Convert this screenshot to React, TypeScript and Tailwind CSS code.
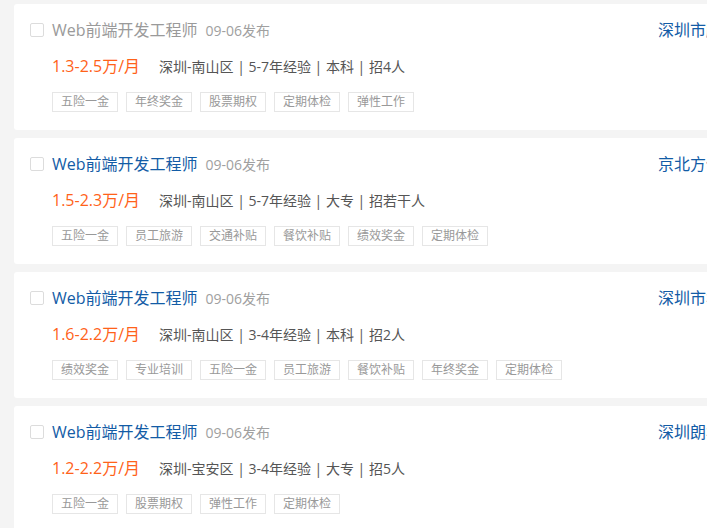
import React from 'react';

type Job = {
  title: string;
  visited?: boolean;
  date: string;
  salary: string;
  info: string;
  tags: string[];
  company: string;
};

const jobs: Job[] = [
  { title: 'Web前端开发工程师', visited: true, date: '09-06发布', salary: '1.3-2.5万/月', info: '深圳-南山区 | 5-7年经验 | 本科 | 招4人', tags: ['五险一金', '年终奖金', '股票期权', '定期体检', '弹性工作'], company: '深圳市腾讯计算机系统有限公司' },
  { title: 'Web前端开发工程师', date: '09-06发布', salary: '1.5-2.3万/月', info: '深圳-南山区 | 5-7年经验 | 大专 | 招若干人', tags: ['五险一金', '员工旅游', '交通补贴', '餐饮补贴', '绩效奖金', '定期体检'], company: '京北方信息技术股份有限公司' },
  { title: 'Web前端开发工程师', date: '09-06发布', salary: '1.6-2.2万/月', info: '深圳-南山区 | 3-4年经验 | 本科 | 招2人', tags: ['绩效奖金', '专业培训', '五险一金', '员工旅游', '餐饮补贴', '年终奖金', '定期体检'], company: '深圳市华云中盛科技有限公司' },
  { title: 'Web前端开发工程师', date: '09-06发布', salary: '1.2-2.2万/月', info: '深圳-宝安区 | 3-4年经验 | 大专 | 招5人', tags: ['五险一金', '股票期权', '弹性工作', '定期体检'], company: '深圳朗华供应链服务有限公司' },
];

const font = { fontFamily: '"Open Sans", "Noto Sans CJK SC", sans-serif' };

export default function App() {
  return (
    <div className="w-[707px] h-[528px] overflow-hidden bg-[#f4f4f4] pl-[14px] pt-1" style={font}>
      <div className="flex flex-col gap-2 w-[900px]">
        {jobs.map((job, i) => (
          <div key={i} className="bg-white rounded-[3px] pl-4 pt-[14px] pb-[18px] flex">
            <div className="w-[628px] shrink-0">
              <div className="flex items-center h-6">
                <span className="w-[14px] h-[14px] border border-[#dcdcdc] rounded-[2px] bg-white mr-2 shrink-0" />
                <span className={`text-[16px] leading-6 ${job.visited ? 'text-[#9a9a9a]' : 'text-[#135ca6]'}`}>{job.title}</span>
                <span className="ml-2 text-[14px] text-[#a0a0a0]">{job.date}</span>
              </div>
              <div className="flex items-center h-6 mt-3 pl-[22px]">
                <span className="text-[16px] text-[#ff6219] w-[107px] shrink-0 whitespace-nowrap">{job.salary}</span>
                <span className="text-[14px] text-[#555] whitespace-nowrap">{job.info}</span>
              </div>
              <div className="flex gap-2 mt-[14px] pl-[22px]">
                {job.tags.map((t) => (
                  <span key={t} className="border border-[#e6e6e6] px-2 h-5 leading-[18px] text-[12px] text-[#999]">{t}</span>
                ))}
              </div>
            </div>
            <div className="whitespace-nowrap text-[16px] leading-6 text-[#135ca6]">{job.company}</div>
          </div>
        ))}
      </div>
    </div>
  );
}
